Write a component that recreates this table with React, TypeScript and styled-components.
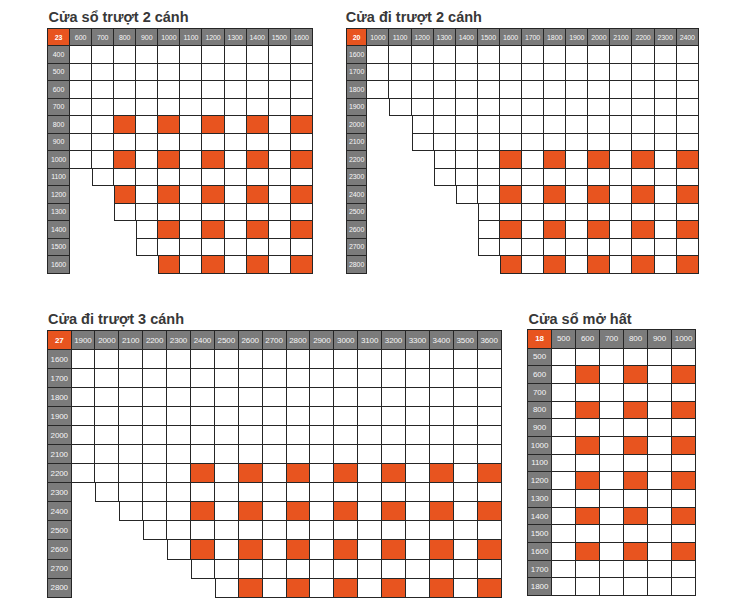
import React from "react";
import styled, { createGlobalStyle } from "styled-components";

const GlobalStyle = createGlobalStyle`
  html, body { margin: 0; padding: 0; background: #ffffff; }
  body { font-family: "Liberation Sans", Arial, sans-serif; }
`;

type Spec = {
  title: string;
  corner: string;
  cols: number[];
  rows: number[];
  starts: number[];
  hotRowMin: number;
  hotRowMax: number;
  hotColMin: number;
  cornerW: number;
  colW: number;
  headH: number;
  rowH: number;
  font: number;
  titleGap: number;
  titleIndent: number;
};

const range = (from: number, to: number) => {
  const out: number[] = [];
  for (let v = from; v <= to; v += 100) out.push(v);
  return out;
};

const tables: Record<string, Spec> = {
  t1: {
    title: "Cửa sổ trượt 2 cánh",
    corner: "23",
    cols: range(600, 1600),
    rows: range(400, 1600),
    starts: [0, 0, 0, 0, 0, 0, 0, 1, 2, 2, 3, 3, 4],
    hotRowMin: 800,
    hotRowMax: 1600,
    hotColMin: 800,
    cornerW: 22,
    colW: 22.09,
    headH: 17,
    rowH: 17.5,
    font: 7,
    titleGap: 2,
    titleIndent: 1.5,
  },
  t2: {
    title: "Cửa đi trượt 2 cánh",
    corner: "20",
    cols: range(1000, 2400),
    rows: range(1600, 2800),
    starts: [0, 0, 0, 1, 2, 2, 3, 3, 4, 5, 5, 5, 6],
    hotRowMin: 2200,
    hotRowMax: 2800,
    hotColMin: 1600,
    cornerW: 20.5,
    colW: 22.1,
    headH: 17,
    rowH: 17.5,
    font: 7,
    titleGap: 2,
    titleIndent: 0,
  },
  t3: {
    title: "Cửa đi trượt 3 cánh",
    corner: "27",
    cols: range(1900, 3600),
    rows: range(1600, 2800),
    starts: [0, 0, 0, 0, 0, 0, 0, 1, 2, 3, 4, 5, 6],
    hotRowMin: 2200,
    hotRowMax: 2800,
    hotColMin: 2400,
    cornerW: 23.5,
    colW: 23.9,
    headH: 19,
    rowH: 19.05,
    font: 8,
    titleGap: 2.5,
    titleIndent: 1,
  },
  t4: {
    title: "Cửa sổ mở hất",
    corner: "18",
    cols: range(500, 1000),
    rows: range(500, 1800),
    starts: new Array(14).fill(0),
    hotRowMin: 600,
    hotRowMax: 1600,
    hotColMin: 600,
    cornerW: 24,
    colW: 24,
    headH: 19,
    rowH: 17.7,
    font: 8,
    titleGap: 1,
    titleIndent: 1.5,
  },
};

const LINE = "#262626";
const GREY = "#7b7b7b";
const ORANGE = "#e8541f";

const Page = styled.div`
  padding: 8px 0 0 47px;
  display: flex;
  flex-direction: column;
`;

const Row = styled.div<{ $gap: number; $top: number }>`
  display: flex;
  align-items: flex-start;
  gap: ${(p) => p.$gap}px;
  margin-top: ${(p) => p.$top}px;
`;

const Section = styled.section`
  display: flex;
  flex-direction: column;
`;

const Title = styled.h2<{ $gap: number; $indent: number }>`
  margin: 0 0 ${(p) => p.$gap}px 0;
  padding-left: ${(p) => p.$indent}px;
  font-family: "Liberation Sans", Arial, sans-serif;
  font-size: 14.5px;
  line-height: 18px;
  font-weight: 700;
  color: #383838;
  white-space: nowrap;
`;

const Grid = styled.div<{ $cornerW: number; $colW: number; $n: number; $headH: number; $rowH: number; $m: number }>`
  display: grid;
  grid-template-columns: ${(p) => p.$cornerW}px repeat(${(p) => p.$n}, ${(p) => p.$colW}px);
  grid-template-rows: ${(p) => p.$headH}px repeat(${(p) => p.$m}, ${(p) => p.$rowH}px);
  align-self: flex-start;
  border-top: 1px solid ${LINE};
  border-left: 1px solid ${LINE};
`;

const HeadCell = styled.div<{ $font: number }>`
  box-sizing: border-box;
  display: flex;
  align-items: center;
  justify-content: center;
  background: ${GREY};
  color: #f6f6f6;
  font-size: ${(p) => p.$font}px;
  letter-spacing: -0.1px;
  border-right: 1px solid ${LINE};
  border-bottom: 1px solid ${LINE};
  white-space: nowrap;
  overflow: hidden;
`;

const Corner = styled(HeadCell)`
  background: ${ORANGE};
  font-weight: 700;
  color: #ffffff;
`;

const LabelCell = styled(HeadCell)`
  background: ${GREY};
`;

const Cell = styled.div<{ $hot: boolean; $first: boolean }>`
  box-sizing: border-box;
  background: ${(p) => (p.$hot ? ORANGE : "#ffffff")};
  border-right: 1px solid ${LINE};
  border-bottom: 1px solid ${LINE};
  border-left: ${(p) => (p.$first ? `1px solid ${LINE}` : "none")};
`;

const Blank = styled.div``;

function Table({ spec }: { spec: Spec }) {
  const isHot = (r: number, c: number) =>
    r % 200 === 0 && c % 200 === 0 && r >= spec.hotRowMin && r <= spec.hotRowMax && c >= spec.hotColMin;
  return (
    <Section>
      <Title $gap={spec.titleGap} $indent={spec.titleIndent}>
        {spec.title}
      </Title>
      <Grid
        $cornerW={spec.cornerW}
        $colW={spec.colW}
        $n={spec.cols.length}
        $headH={spec.headH}
        $rowH={spec.rowH}
        $m={spec.rows.length}
      >
        <Corner $font={spec.font}>{spec.corner}</Corner>
        {spec.cols.map((c) => (
          <HeadCell key={`h${c}`} $font={spec.font}>
            {c}
          </HeadCell>
        ))}
        {spec.rows.map((r, ri) => (
          <React.Fragment key={`r${r}`}>
            <LabelCell $font={spec.font}>{r}</LabelCell>
            {spec.cols.map((c, ci) =>
              ci < spec.starts[ri] ? (
                <Blank key={`b${r}-${c}`} />
              ) : (
                <Cell key={`c${r}-${c}`} $hot={isHot(r, c)} $first={ci === spec.starts[ri] && ci > 0} />
              )
            )}
          </React.Fragment>
        ))}
      </Grid>
    </Section>
  );
}

export default function App() {
  return (
    <>
      <GlobalStyle />
      <Page>
        <Row $gap={33} $top={0}>
          <Table spec={tables.t1} />
          <Table spec={tables.t2} />
        </Row>
        <Row $gap={25.5} $top={36}>
          <Table spec={tables.t3} />
          <Table spec={tables.t4} />
        </Row>
      </Page>
    </>
  );
}
